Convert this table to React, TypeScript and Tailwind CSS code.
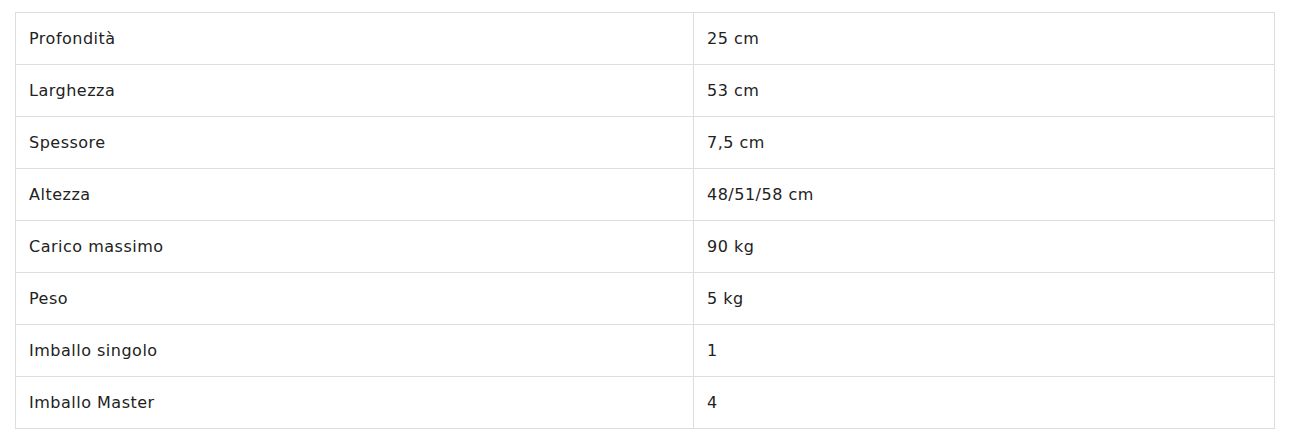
import React from "react";

const rows: [string, string][] = [
  ["Profondità", "25 cm"],
  ["Larghezza", "53 cm"],
  ["Spessore", "7,5 cm"],
  ["Altezza", "48/51/58 cm"],
  ["Carico massimo", "90 kg"],
  ["Peso", "5 kg"],
  ["Imballo singolo", "1"],
  ["Imballo Master", "4"],
];

export default function App() {
  return (
    <div className="bg-white w-[1298px] h-[446px] pt-[12px] pl-[15px]" style={{ fontFamily: '"DejaVu Sans", Verdana, sans-serif' }}>
      <table className="w-[1260px] border-collapse border border-[#dddddd] text-[16px] tracking-[0.5px] text-[#222222]">
        <tbody>
          {rows.map(([k, v]) => (
            <tr key={k} className="h-[52px] border-b border-[#dddddd]">
              <td className="w-[678px] border-r border-[#dddddd] px-[13px] align-middle">{k}</td>
              <td className="px-[13px] align-middle">{v}</td>
            </tr>
          ))}
        </tbody>
      </table>
    </div>
  );
}
